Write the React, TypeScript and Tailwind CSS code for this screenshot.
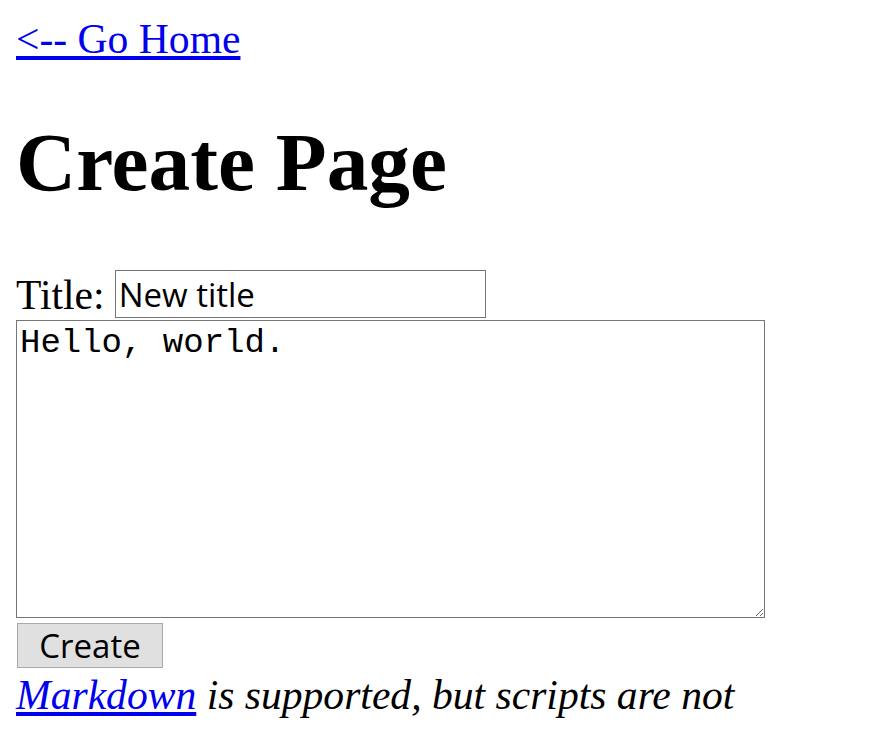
export default function App() {
  return (
    <div className="min-h-screen bg-white px-4 pt-4 text-[41.6px] leading-[46px] text-black [font-family:'Liberation_Serif',serif]">
      <div className="h-[46px]">
        <a href="#" className="text-[#0000ee] underline">
          &lt;-- Go Home
        </a>
      </div>

      <h1 className="my-[54px] text-[83.3px] leading-[92px] font-bold">Create Page</h1>

      <form onSubmit={(e) => e.preventDefault()}>
        <div className="flex h-[58px] items-end gap-[10px] pb-[2px]">
          <label htmlFor="title">Title:</label>
          <input
            id="title"
            defaultValue="New title"
            className="h-[48px] w-[371px] border border-[#767676] bg-white pl-[3px] text-[33px] leading-[44px] outline-none [font-family:'Open_Sans',sans-serif]"
          />
        </div>
        <textarea
          defaultValue="Hello, world."
          className="block h-[298px] w-[749px] border border-[#767676] px-[3px] pt-[3px] text-[34px] leading-[38px] outline-none [font-family:'Liberation_Mono',monospace]"
        />
        <div className="flex h-[54px] items-start pt-[5px] pl-[1px]">
          <button
            type="submit"
            className="h-[45px] w-[146px] border border-[#a9a9a9] bg-[#e0e0e0] text-[33px] leading-[40px] [font-family:'Open_Sans',sans-serif]"
          >
            Create
          </button>
        </div>
      </form>

      <p className="italic">
        <a href="#" className="text-[#0000ee] underline">
          Markdown
        </a>{" "}
        is supported, but scripts are not
      </p>
    </div>
  )
}
